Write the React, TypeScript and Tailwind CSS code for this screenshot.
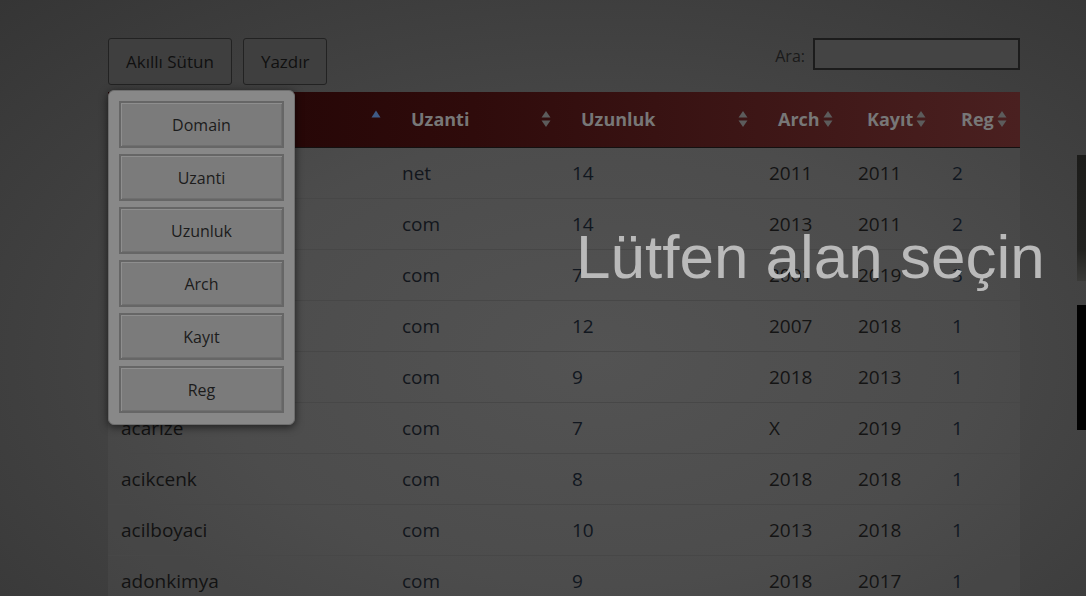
import React from "react";

type Row = {
  domain: string;
  ext: string;
  len: number;
  arch: string;
  kayit: string;
  reg: number;
};

const rows: Row[] = [
  { domain: "abdullahgursoy", ext: "net", len: 14, arch: "2011", kayit: "2011", reg: 2 },
  { domain: "abakusegitimci", ext: "com", len: 14, arch: "2013", kayit: "2011", reg: 2 },
  { domain: "abiturk", ext: "com", len: 7, arch: "2001", kayit: "2019", reg: 3 },
  { domain: "acadefilmler", ext: "com", len: 12, arch: "2007", kayit: "2018", reg: 1 },
  { domain: "acalyapim", ext: "com", len: 9, arch: "2018", kayit: "2013", reg: 1 },
  { domain: "acarize", ext: "com", len: 7, arch: "X", kayit: "2019", reg: 1 },
  { domain: "acikcenk", ext: "com", len: 8, arch: "2018", kayit: "2018", reg: 1 },
  { domain: "acilboyaci", ext: "com", len: 10, arch: "2013", kayit: "2018", reg: 1 },
  { domain: "adonkimya", ext: "com", len: 9, arch: "2018", kayit: "2017", reg: 1 },
];

const columns = ["Domain", "Uzanti", "Uzunluk", "Arch", "Kayıt", "Reg"];

// both arrows, column not sorted yet
const SortBoth = () => (
  <svg width="10" height="18" viewBox="0 0 10 18" className="shrink-0">
    <path d="M5 1 L9.5 7.5 H0.5 Z" fill="#5c5c5c" />
    <path d="M5 17 L9.5 10.5 H0.5 Z" fill="#5c5c5c" />
  </svg>
);

const SortAsc = () => (
  <svg width="10" height="8" viewBox="0 0 10 8" className="shrink-0">
    <path d="M5 0.5 L9.5 7.5 H0.5 Z" fill="#3f5a86" />
  </svg>
);

const ToolButton = ({ label }: { label: string }) => (
  <button className="h-[47px] px-[17px] rounded-[3px] border border-[#222] bg-[#3f3f3f] text-[17px] text-[#101010]">
    {label}
  </button>
);

const App = () => {
  return (
    <div
      className="relative w-[1086px] h-[596px] overflow-hidden bg-[radial-gradient(ellipse_at_55%_60%,#4e4e4e_0%,#474747_45%,#353535_100%)]"
      style={{ fontFamily: "'Open Sans', 'Noto Sans', sans-serif" }}
    >
      <div className="pl-[108px] pt-[38px] w-[1020px]">
        {/* toolbar */}
        <div className="flex justify-between items-start">
          <div className="flex gap-[11px]">
            <ToolButton label="Akıllı Sütun" />
            <ToolButton label="Yazdır" />
          </div>
          <label className="flex items-center gap-2 h-[32px] text-[16px] text-[#1a1a1a]">
            <span className="mt-[3px]">Ara:</span>
            <input
              type="text"
              className="w-[207px] h-[32px] border-2 border-[#1c1c1c] bg-[#444] outline-none"
            />
          </label>
        </div>

        <table className="mt-[7px] w-full border-collapse text-left">
          <thead className="bg-[linear-gradient(90deg,#1e0303_0%,#2f0b0b_40%,#4a2020_100%)] border-b border-[#141010]">
            <tr className="h-[55px] text-[18px] font-bold text-[#777]">
              {columns.map((c, i) => (
                <th
                  key={c}
                  className={
                    i === 0
                      ? "w-[281px] pl-[13px] pr-[8px]"
                      : i === 1
                      ? "w-[170px] pl-[22px] pr-[8px]"
                      : i === 2
                      ? "w-[197px] pl-[22px] pr-[8px]"
                      : i === 3
                      ? "w-[89px] pl-[22px] pr-[4px]"
                      : i === 4
                      ? "w-[94px] pl-[22px] pr-[4px]"
                      : "pl-[22px] pr-[4px]"
                  }
                >
                  <div
                    className={
                      i < 3
                        ? "flex items-center justify-between"
                        : "flex items-center gap-[3px]"
                    }
                  >
                    <span>{c}</span>
                    {i === 0 ? (
                      <span className="-mt-[10px]">
                        <SortAsc />
                      </span>
                    ) : (
                      <SortBoth />
                    )}
                  </div>
                </th>
              ))}
            </tr>
          </thead>
          <tbody className="text-[19px]">
            {rows.map((r) => (
              <tr key={r.domain} className="h-[51px] border-b border-[#474747] bg-[#ffffff08]">
                <td className="pl-[13px] pt-[2px] text-[#121212]">{r.domain}</td>
                <td className="pl-[13px] pt-[2px] text-[#12161c]">{r.ext}</td>
                <td className="pl-[13px] pt-[2px] text-[#11171f]">{r.len}</td>
                <td className="pl-[13px] pt-[2px] text-[#141414]">{r.arch}</td>
                <td className="pl-[13px] pt-[2px] text-[#141414]">{r.kayit}</td>
                <td className="pl-[13px] pt-[2px] text-[#111822]">{r.reg}</td>
              </tr>
            ))}
          </tbody>
        </table>
      </div>

      {/* edge of the neighbouring panels */}
      <div className="absolute left-[1077px] top-[155px] w-[9px] h-[126px] bg-[linear-gradient(180deg,#1c1c1a_0%,#222220_75%,#3a3a38_100%)]" />
      <div className="absolute left-[1077px] top-[305px] w-[9px] h-[125px] bg-[#020202]" />

      {/* column picker popup */}
      <div className="absolute left-[108px] top-[90px] w-[187px] h-[335px] rounded-[6px] bg-[#888] border border-[#6e6e6e] shadow-[0_2px_8px_rgba(0,0,0,0.6)] px-[10px] pt-[10px] flex flex-col gap-[6px]">
        {columns.map((c) => (
          <button
            key={c}
            className="h-[47px] w-[165px] border-2 border-[#666] bg-[#7b7b7b] shadow-[inset_1px_1px_0_#8e8e8e,inset_-1px_-1px_0_#6f6f6f] text-[16px] text-[#1c1c1c]"
          >
            {c}
          </button>
        ))}
      </div>

      <div
        className="absolute left-[576px] top-[226px] text-[62px] leading-none text-[#bababa] whitespace-nowrap"
        style={{ fontFamily: "'Liberation Sans', Arial, sans-serif" }}
      >
        Lütfen alan seçin
      </div>
    </div>
  );
};

export default App;
